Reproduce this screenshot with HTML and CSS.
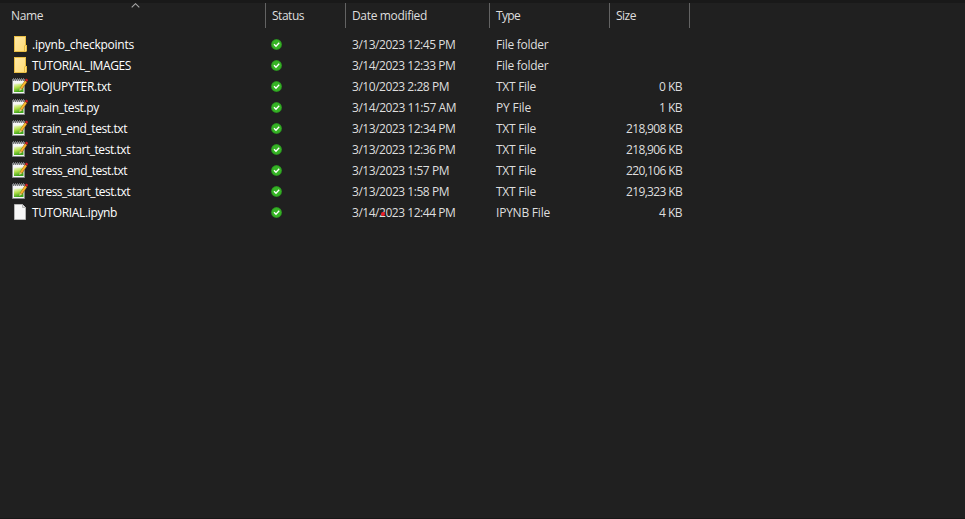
FILE: index.html
```
<!DOCTYPE html>
<html lang="en">
<head>
<meta charset="utf-8">
<title>Files</title>
<link rel="stylesheet" href="styles.css">
</head>
<body>
<svg class="defs" width="0" height="0">
<defs>
<linearGradient id="gf" x1="0" y1="0" x2="1" y2="1"><stop offset="0" stop-color="#ffe9a6"/><stop offset="1" stop-color="#ffdc76"/></linearGradient>
<linearGradient id="gg" x1="0" y1="0" x2=".3" y2="1"><stop offset="0" stop-color="#f4f9dc"/><stop offset=".5" stop-color="#b5e04a"/><stop offset="1" stop-color="#3fa51c"/></linearGradient>
<symbol id="folder" viewBox="0 0 16 16"><path d="M2 0h12v9h1v6.500h-1v.5H2z" fill="#e9be45"/><path d="M3 1h10v8.500h-1V15H3z" fill="url(#gf)"/><path d="M13 10h1v5h-1z" fill="#ffdf7e"/></symbol>
<symbol id="note" viewBox="0 0 16 16"><path d="M.5 1.500h12V15.500H.5z" fill="#f6f6f6" stroke="#85878a"/><path d="M2 5.500h9.500v8.500H2z" fill="url(#gg)"/><path d="M1 2.500h11" stroke="#c4c4c4"/><path d="M1.500 0v3M3.500 0v3M5.500 0v3M7.500 0v3M9.500 0v3M11.500 0v3" stroke="#77797b"/><path d="M14 3.300L9 10.800" stroke="#80541c" stroke-width="2.800"/><path d="M13.900 3.300L9 10.500" stroke="#f8b52e" stroke-width="2.100"/><path d="M13.500 1.300l2.200 1.500" stroke="#d21c22" stroke-width="2.200"/><path d="M7.900 10l2.100 1.400-2.800 1.700z" fill="#e7c889"/></symbol>
<symbol id="blank" viewBox="0 0 16 16"><path d="M2.500.5h8l3 3v12h-11z" fill="#f7f7f7" stroke="#b5b5b5"/><path d="M10.500.5v3h3" fill="#ddd" stroke="#b5b5b5"/></symbol>
<symbol id="ok" viewBox="0 0 12 12"><circle cx="5.500" cy="5.500" r="5.400" fill="#2b9420"/><circle cx="5.500" cy="5.500" r="4.600" fill="#36b325"/><path d="M3 5.300l2 2 3.200-3.500" fill="none" stroke="#fff" stroke-width="1.300"/></symbol>
</defs>
</svg>
<main class="explorer">
<header class="row head">
<div class="cell name">Name<svg class="sort" viewBox="0 0 9 5"><path d="M.7 4.300L4.500.7l3.800 3.600" fill="none" stroke="#a8a8a8" stroke-width="1.100"/></svg></div>
<div class="cell status">Status</div><div class="cell date">Date modified</div><div class="cell type">Type</div><div class="cell size">Size</div>
</header>
<section class="list" id="list"></section>
</main>
<script src="script.js"></script>
</body>
</html>
```
FILE: styles.css
```
* { box-sizing: border-box; }
body { margin: 0; background: #202020; color: #dedede; font: 12px/21px "Open Sans", "Noto Sans", sans-serif; }
.defs { display: block; }
.explorer { height: 519px; border-top: 3px solid #191919; border-bottom: 1px solid #181818; overflow: hidden; }
.row { display: grid; grid-template-columns: 266px 80px 144px 120px 80px; width: 690px; height: 21px; }
.cell { white-space: nowrap; padding-left: 6px; }
.head { height: 25px; line-height: 26px; }
.head .cell { height: 25px; border-right: 1px solid #636363; position: relative; }
.head .name { padding-left: 11px; }
.sort { position: absolute; left: 131px; top: 0; width: 9px; height: 5px; }
.list { padding-top: 6px; }
.list .name { display: flex; padding-left: 12px; color: #fff; }
.icon { width: 16px; height: 16px; margin: 2px 4px 0 0; }
.check { display: block; width: 12px; height: 12px; margin: 5px 0 0 -1px; }
.list .size { text-align: right; padding-right: 8px; }
.text { display: inline-block; }
.dot { position: absolute; left: 35px; top: 10px; width: 4px; height: 4px; border-radius: 2px; background: #ed1c24; }
.date { position: relative; }
```
FILE: script.js
```
const files = [
  ["folder", ".ipynb_checkpoints", "3/13/2023 12:45 PM", "File folder", "", 102],
  ["folder", "TUTORIAL_IMAGES", "3/14/2023 12:33 PM", "File folder", "", 99],
  ["note", "DOJUPYTER.txt", "3/10/2023 2:28 PM", "TXT File", "0 KB", 79],
  ["note", "main_test.py", "3/14/2023 11:57 AM", "PY File", "1 KB", 67],
  ["note", "strain_end_test.txt", "3/13/2023 12:34 PM", "TXT File", "218,908 KB", 95],
  ["note", "strain_start_test.txt", "3/13/2023 12:36 PM", "TXT File", "218,906 KB", 98],
  ["note", "stress_end_test.txt", "3/13/2023 1:57 PM", "TXT File", "220,106 KB", 95],
  ["note", "stress_start_test.txt", "3/13/2023 1:58 PM", "TXT File", "219,323 KB", 98],
  ["blank", "TUTORIAL.ipynb", "3/14/2023 12:44 PM", "IPYNB File", "4 KB", 85]
];
const widths = { "File folder": 52.5, "TXT File": 40, "PY File": 35, "IPYNB File": 54, "Name": 32, "Status": 32, "Date modified": 75, "Type": 24, "Size": 20 };
const text = (value, width) => `<span class="text" data-width="${width}">${value}</span>`;
document.getElementById("list").innerHTML = files.map(([icon, name, date, type, size, width], i) => `
<div class="row">
<div class="cell name"><svg class="icon"><use href="#${icon}"/></svg>${text(name, width)}</div>
<div class="cell status"><svg class="check"><use href="#ok"/></svg></div>
<div class="cell date">${text(date, date.endsWith("AM") ? 104 : date.length === 18 ? 103.3 : 97)}${i === 8 ? '<i class="dot"></i>' : ""}</div>
<div class="cell type">${text(type, widths[type])}</div>
<div class="cell size">${size ? text(size, size.length > 4 ? 56 : 23) : ""}</div>
</div>`).join("");
document.querySelectorAll(".head .cell").forEach(cell => {
  const span = document.createElement("span");
  span.className = "text";
  span.textContent = cell.firstChild.textContent;
  span.dataset.width = widths[span.textContent];
  cell.replaceChild(span, cell.firstChild);
});
// Tracks each label to its column text width.
document.querySelectorAll(".text").forEach(el => {
  const spacing = (el.dataset.width - el.getBoundingClientRect().width) / el.textContent.length;
  el.style.letterSpacing = spacing + "px";
});
```
